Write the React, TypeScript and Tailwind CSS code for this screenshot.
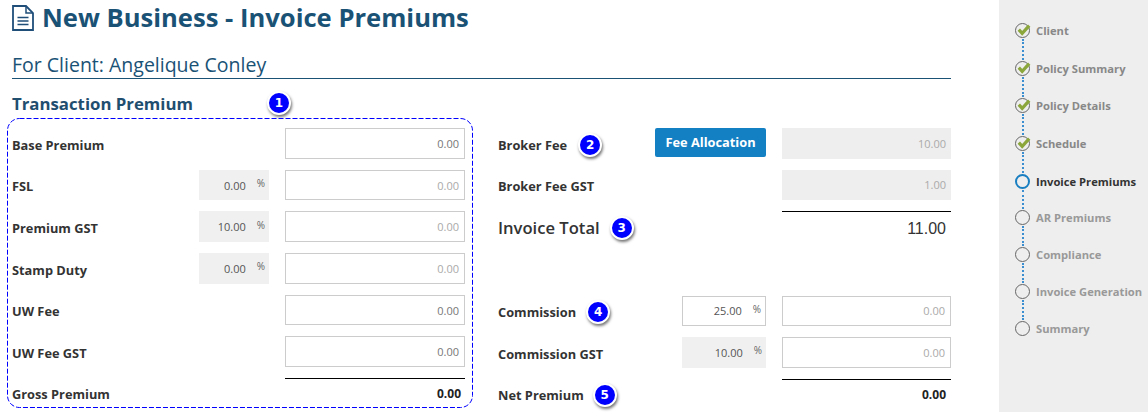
const font = "font-['Open_Sans',sans-serif]";

const Badge = ({ n, className = "" }: { n: number; className?: string }) => (
  <span
    className={`flex h-[24px] w-[24px] shrink-0 items-center justify-center rounded-full border-2 border-white bg-[#0000ff] font-['DejaVu_Sans',sans-serif] text-[12px] leading-none font-bold text-white shadow-[1px_2px_3px_rgba(0,0,0,0.55)] ${className}`}
  >
    {n}
  </span>
);

const Label = ({ children }: { children: React.ReactNode }) => (
  <span className="pt-[4px] text-[12.8px] font-bold text-[#333]">{children}</span>
);

const Amount = ({ value, muted, grey, w = "w-[180px]" }: { value: string; muted?: boolean; grey?: boolean; w?: string }) => (
  <div
    className={`flex h-full ${w} items-center justify-end px-[5px] pt-[2px] text-[11px] ${
      grey ? "bg-[#eee]" : "border border-[#ccc] bg-white"
    } ${muted ? "text-[#aaa]" : "text-[#777]"}`}
  >
    {value}
  </div>
);

const Pct = ({ value, grey = true, w = "w-[70px]" }: { value: string; grey?: boolean; w?: string }) => (
  <div
    className={`flex h-full ${w} items-center justify-end gap-[11px] pt-[2px] pr-[4px] text-[11px] text-[#555] ${
      grey ? "bg-[#f0f0f0]" : "border border-[#ccc] bg-white"
    }`}
  >
    <span>{value}</span>
    <span className="pb-[5px] text-[10px] text-[#666]">%</span>
  </div>
);

const premiumRows = [
  { label: "Base Premium", value: "0.00" },
  { label: "FSL", pct: "0.00", value: "0.00", muted: true },
  { label: "Premium GST", pct: "10.00", value: "0.00", muted: true },
  { label: "Stamp Duty", pct: "0.00", value: "0.00", muted: true },
  { label: "UW Fee", value: "0.00" },
  { label: "UW Fee GST", value: "0.00" },
];

const steps = [
  { name: "Client", state: "done" },
  { name: "Policy Summary", state: "done" },
  { name: "Policy Details", state: "done" },
  { name: "Schedule", state: "done" },
  { name: "Invoice Premiums", state: "current" },
  { name: "AR Premiums", state: "todo" },
  { name: "Compliance", state: "todo" },
  { name: "Invoice Generation", state: "todo" },
  { name: "Summary", state: "todo" },
];

const StepIcon = ({ state }: { state: string }) => {
  if (state === "current") {
    return <span className="block h-[15px] w-[15px] rounded-full border-2 border-[#1a7fc1]" />;
  }
  if (state === "todo") {
    return <span className="block h-[15px] w-[15px] rounded-full border border-[#666]" />;
  }
  return (
    <svg width="17" height="15" viewBox="0 0 17 15" className="block">
      <circle cx="7.5" cy="7.5" r="7" fill="none" stroke="#666" strokeWidth="1" />
      <path d="M3.8 6.6 L7.2 10.4 L14.2 2.6" fill="none" stroke="#8ba63a" strokeWidth="3.2" />
    </svg>
  );
};

const DocIcon = () => (
  <svg width="22" height="26" viewBox="0 0 22 26" fill="none" stroke="#1f4e79" className="block">
    <path d="M1 1 H14 L21 8 V25 H1 Z" strokeWidth="1.8" />
    <path d="M14 1 V8 H21" strokeWidth="1.5" />
    <path d="M5.5 12.5 H16.5 M5.5 16 H16.5 M5.5 19.5 H16.5" strokeWidth="1.6" />
  </svg>
);

export default function App() {
  return (
    <div className={`flex h-[412px] w-[1148px] overflow-hidden bg-white ${font}`}>
      <main className="w-[999px] shrink-0 pr-[48px] pl-[12px]">
        <div className="flex h-[35px] items-center gap-[8px]">
          <DocIcon />
          <h1 className="text-[25.6px] leading-none font-bold text-[#1a5276]">New Business - Invoice Premiums</h1>
        </div>
        <div className="mt-[18px] h-[26px] border-b border-[#1a5276] text-[19.5px] leading-[24px] text-[#1a5276]">
          For Client: Angelique Conley
        </div>
        <div className="mt-[13px] flex h-[24px] items-center">
          <h2 className="w-[255px] text-[16.8px] font-bold text-[#1f4e6f]">Transaction Premium</h2>
          <Badge n={1} className="mb-[2px]" />
        </div>

        <div className="mt-[2px] flex">
          <section className="relative -ml-[5px] h-[290px] w-[466px] shrink-0 pt-[10px] pr-[8px] pl-[5px]">
            <svg width="466" height="290" fill="none" className="absolute top-0 left-0">
              <rect x="0.5" y="0.5" width="465" height="289" rx="12" stroke="#0000ff" strokeDasharray="5 2" />
            </svg>
            <div className="flex flex-col gap-[11.05px]">
              {premiumRows.map((row) => (
                <div key={row.label} className="flex h-[30.6px] items-center justify-between">
                  <Label>{row.label}</Label>
                  <div className="flex h-full gap-[16px]">
                    {row.pct && <Pct value={row.pct} />}
                    <Amount value={row.value} muted={row.muted} />
                  </div>
                </div>
              ))}
            </div>
            <div className="mt-[11px] ml-auto w-[180px] border-t border-black" />
            <div className="flex h-[28px] items-center justify-between pr-[4px]">
              <Label>Gross Premium</Label>
              <span className="pt-[3px] text-[12px] font-bold text-[#222]">0.00</span>
            </div>
          </section>

          <section className="ml-[25px] w-[453px] pt-[10px]">
            <div className="flex h-[30.6px] items-center">
              <Label>Broker Fee</Label>
              <Badge n={2} className="mt-[3px] ml-[11px]" />
              <button className="mb-[2px] ml-auto h-[29px] w-[111px] rounded-[2px] bg-[#1480c4] text-[12.8px] font-bold text-white">
                Fee Allocation
              </button>
              <div className="ml-[16px] h-full">
                <Amount value="10.00" muted grey w="w-[169px]" />
              </div>
            </div>
            <div className="mt-[11px] flex h-[30px] items-center justify-between">
              <Label>Broker Fee GST</Label>
              <Amount value="1.00" muted grey w="w-[169px]" />
            </div>
            <div className="mt-[11px] ml-auto w-[169px] border-t border-black" />
            <div className="flex h-[32px] items-center">
              <span className="pt-[2px] text-[16.6px] font-semibold text-[#333]">Invoice Total</span>
              <Badge n={3} className="mt-[1px] ml-[10px]" />
              <span className="ml-auto pt-[2px] pr-[5px] font-['Liberation_Sans',sans-serif] text-[16px] text-[#333]">11.00</span>
            </div>

            <div className="mt-[52px] flex h-[30px] items-center">
              <Label>Commission</Label>
              <Badge n={4} className="mt-[3px] ml-[10px]" />
              <div className="ml-auto h-full">
                <Pct value="25.00" grey={false} w="w-[84px]" />
              </div>
              <div className="ml-[16px] h-full">
                <Amount value="0.00" muted w="w-[169px]" />
              </div>
            </div>
            <div className="mt-[11px] flex h-[31px] items-center">
              <Label>Commission GST</Label>
              <div className="ml-auto h-full">
                <Pct value="10.00" w="w-[84px]" />
              </div>
              <div className="ml-[16px] h-full">
                <Amount value="0.00" muted w="w-[169px]" />
              </div>
            </div>
            <div className="mt-[11px] ml-auto w-[169px] border-t border-black" />
            <div className="flex h-[28px] items-center">
              <Label>Net Premium</Label>
              <Badge n={5} className="mt-[3px] ml-[9px]" />
              <span className="ml-auto pt-[3px] pr-[5px] text-[12px] font-bold text-[#222]">0.00</span>
            </div>
          </section>
        </div>
      </main>

      <aside className="flex-1 bg-[#eee] pt-[23.4px] pl-[16px]">
        {steps.map((step, i) => (
          <div key={step.name} className={`flex gap-[6px] ${i < 4 ? "h-[37.55px]" : "h-[36.8px]"}`}>
            <div className="flex w-[15px] shrink-0 flex-col items-center">
              <div className="w-[15px] shrink-0">
                <StepIcon state={step.state} />
              </div>
              {i < steps.length - 1 && (
                <div className="my-[1px] flex-1 border-l-2 border-dotted border-[#3b8fd1]" />
              )}
            </div>
            <span
              className={`text-[11.2px] leading-[15px] font-bold whitespace-nowrap ${
                step.state === "current" ? "text-[#333]" : step.state === "done" ? "text-[#888]" : "text-[#999]"
              }`}
            >
              {step.name}
            </span>
          </div>
        ))}
      </aside>
    </div>
  );
}
